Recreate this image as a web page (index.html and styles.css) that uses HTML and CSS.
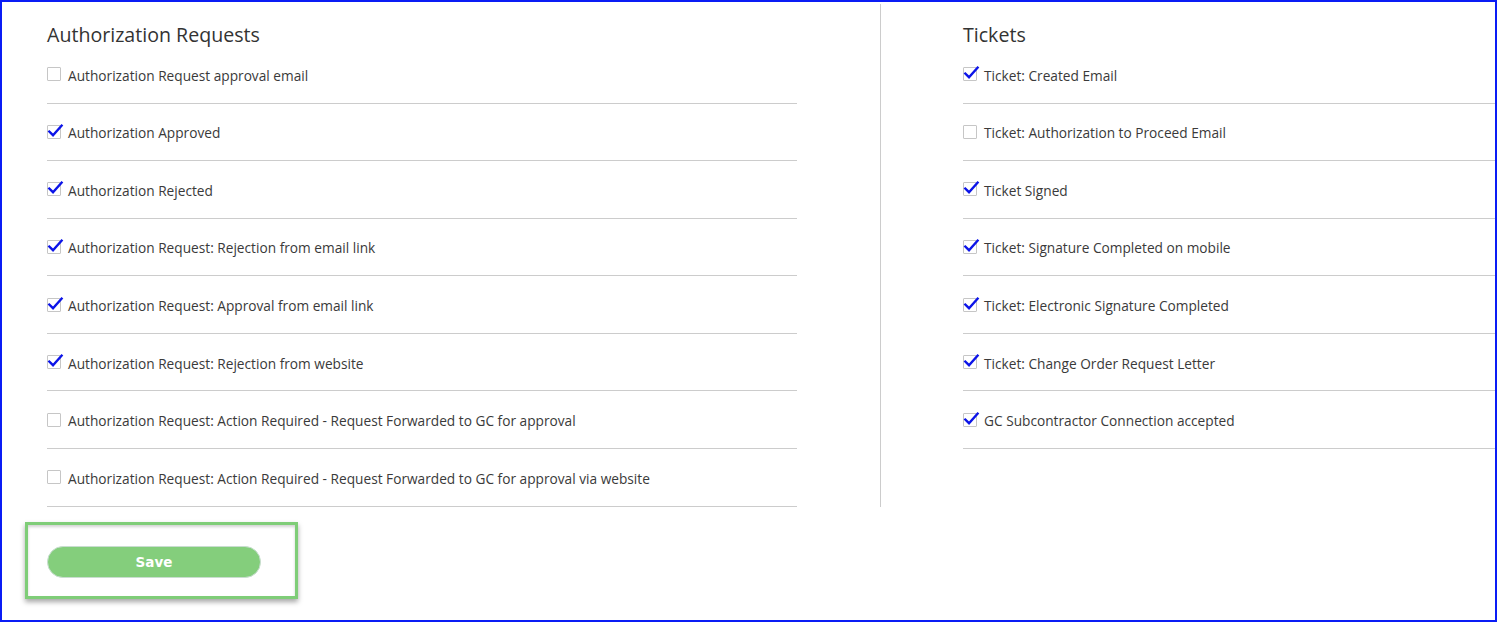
FILE: index.html
```html
<!DOCTYPE html>
<html>
<head>
<meta charset="utf-8">
<link rel="stylesheet" href="styles.css">
</head>
<body>
<div class="frame">
  <div class="panes">
    <section class="pane pane-left">
      <h2 class="title">Authorization Requests</h2>
      <ul class="list list-left">
        <li class="row"><span class="cb"></span><span class="label">Authorization Request approval email</span></li>
        <li class="row"><span class="cb checked"><svg viewBox="0 0 16 16"><path d="M2.3 7.6 L6 11.2 L14.6 1.6"/></svg></span><span class="label">Authorization Approved</span></li>
        <li class="row"><span class="cb checked"><svg viewBox="0 0 16 16"><path d="M2.3 7.6 L6 11.2 L14.6 1.6"/></svg></span><span class="label">Authorization Rejected</span></li>
        <li class="row"><span class="cb checked"><svg viewBox="0 0 16 16"><path d="M2.3 7.6 L6 11.2 L14.6 1.6"/></svg></span><span class="label">Authorization Request: Rejection from email link</span></li>
        <li class="row"><span class="cb checked"><svg viewBox="0 0 16 16"><path d="M2.3 7.6 L6 11.2 L14.6 1.6"/></svg></span><span class="label">Authorization Request: Approval from email link</span></li>
        <li class="row"><span class="cb checked"><svg viewBox="0 0 16 16"><path d="M2.3 7.6 L6 11.2 L14.6 1.6"/></svg></span><span class="label">Authorization Request: Rejection from website</span></li>
        <li class="row"><span class="cb"></span><span class="label">Authorization Request: Action Required - Request Forwarded to GC for approval</span></li>
        <li class="row"><span class="cb"></span><span class="label">Authorization Request: Action Required - Request Forwarded to GC for approval via website</span></li>
      </ul>
    </section>
    <section class="pane pane-right">
      <h2 class="title">Tickets</h2>
      <ul class="list">
        <li class="row"><span class="cb checked"><svg viewBox="0 0 16 16"><path d="M2.3 7.6 L6 11.2 L14.6 1.6"/></svg></span><span class="label">Ticket: Created Email</span></li>
        <li class="row"><span class="cb"></span><span class="label">Ticket: Authorization to Proceed Email</span></li>
        <li class="row"><span class="cb checked"><svg viewBox="0 0 16 16"><path d="M2.3 7.6 L6 11.2 L14.6 1.6"/></svg></span><span class="label">Ticket Signed</span></li>
        <li class="row"><span class="cb checked"><svg viewBox="0 0 16 16"><path d="M2.3 7.6 L6 11.2 L14.6 1.6"/></svg></span><span class="label">Ticket: Signature Completed on mobile</span></li>
        <li class="row"><span class="cb checked"><svg viewBox="0 0 16 16"><path d="M2.3 7.6 L6 11.2 L14.6 1.6"/></svg></span><span class="label">Ticket: Electronic Signature Completed</span></li>
        <li class="row"><span class="cb checked"><svg viewBox="0 0 16 16"><path d="M2.3 7.6 L6 11.2 L14.6 1.6"/></svg></span><span class="label">Ticket: Change Order Request Letter</span></li>
        <li class="row"><span class="cb checked"><svg viewBox="0 0 16 16"><path d="M2.3 7.6 L6 11.2 L14.6 1.6"/></svg></span><span class="label">GC Subcontractor Connection accepted</span></li>
      </ul>
    </section>
  </div>
  <div class="save-box">
    <button class="save-btn">Save</button>
  </div>
</div>
</body>
</html>
```

FILE: styles.css
```css
html, body {
  margin: 0;
  padding: 0;
  background: #ffffff;
}
.frame {
  box-sizing: border-box;
  width: 1497px;
  height: 622px;
  border: 2px solid #0a1cf5;
  font-family: "Open Sans", "Noto Sans", sans-serif;
  color: #3a3a3a;
  overflow: hidden;
}
.panes {
  display: flex;
  padding-top: 2px;
}
.pane {
  box-sizing: border-box;
  padding-top: 19px;
}
.pane-left {
  width: 879px;
  padding-left: 45px;
  padding-right: 83px;
  border-right: 1px solid #cccccc;
}
.pane-right {
  flex: 1;
  padding-left: 82px;
}
.title {
  margin: 0;
  font-size: 19.6px;
  line-height: 23px;
  font-weight: 400;
  color: #333333;
}
.list {
  list-style: none;
  margin: 0;
  padding: 0;
}
.row {
  box-sizing: border-box;
  height: 57.57px;
  padding-top: 3px;
  border-bottom: 1px solid #cccccc;
  display: flex;
  align-items: center;
  gap: 7px;
}
.cb {
  position: relative;
  box-sizing: border-box;
  width: 14px;
  height: 14px;
  margin-top: -3px;
  border: 1px solid #c6c6c6;
  border-radius: 1px;
  background: #fff;
  flex: none;
}
.cb svg {
  position: absolute;
  left: -1px;
  top: -2px;
  width: 16px;
  height: 16px;
  overflow: visible;
}
.cb svg path {
  fill: none;
  stroke: #0c14e8;
  stroke-width: 2.4;
  stroke-linecap: square;
  stroke-linejoin: miter;
}
.label {
  font-size: 13.7px;
  line-height: 18px;
  color: #3a3a3a;
}
.save-box {
  box-sizing: border-box;
  width: 273px;
  height: 77px;
  margin-left: 23px;
  margin-top: 15px;
  border: 3px solid #7fcd78;
  padding: 21px 0 0 19px;
  box-shadow: 0 3px 5px rgba(0, 0, 0, 0.35), inset 0 2px 3px rgba(0, 0, 0, 0.18);
}
.save-btn {
  box-sizing: border-box;
  width: 214px;
  height: 32px;
  border: 1px solid #c9ddd0;
  border-radius: 16px;
  background: #84ce7c;
  color: #ffffff;
  font-family: "DejaVu Sans", Verdana, sans-serif;
  font-weight: 700;
  font-size: 13.5px;
  padding: 0;
}
```
